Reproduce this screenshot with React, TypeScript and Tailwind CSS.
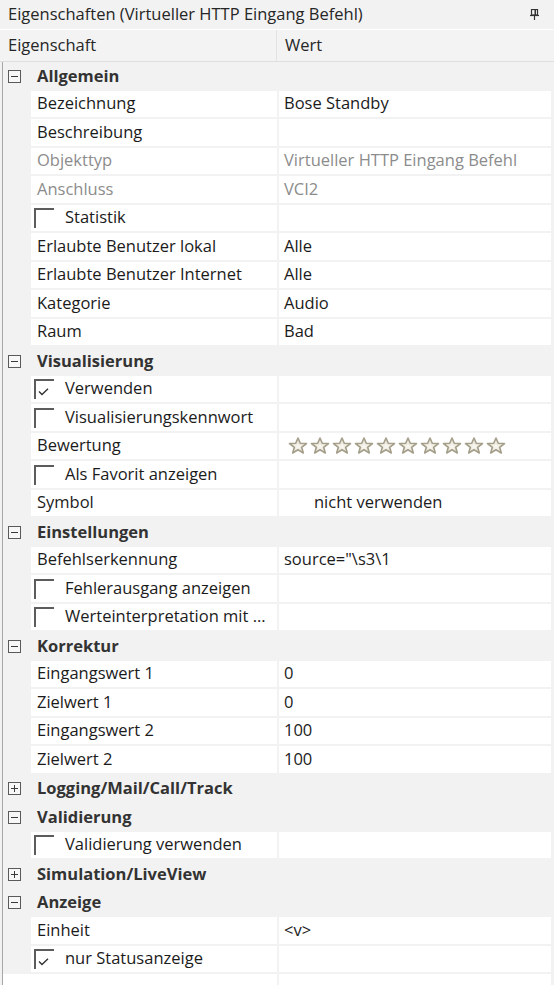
import React from 'react'

type Row =
  | { kind: 'cat'; label: string; open: boolean }
  | { kind: 'prop'; label: string; value?: React.ReactNode; disabled?: boolean; check?: boolean | null; indent?: boolean }

const rows: Row[] = [
  { kind: 'cat', label: 'Allgemein', open: true },
  { kind: 'prop', label: 'Bezeichnung', value: 'Bose Standby' },
  { kind: 'prop', label: 'Beschreibung' },
  { kind: 'prop', label: 'Objekttyp', value: 'Virtueller HTTP Eingang Befehl', disabled: true },
  { kind: 'prop', label: 'Anschluss', value: 'VCI2', disabled: true },
  { kind: 'prop', label: 'Statistik', check: false },
  { kind: 'prop', label: 'Erlaubte Benutzer lokal', value: 'Alle' },
  { kind: 'prop', label: 'Erlaubte Benutzer Internet', value: 'Alle' },
  { kind: 'prop', label: 'Kategorie', value: 'Audio' },
  { kind: 'prop', label: 'Raum', value: 'Bad' },
  { kind: 'cat', label: 'Visualisierung', open: true },
  { kind: 'prop', label: 'Verwenden', check: true },
  { kind: 'prop', label: 'Visualisierungskennwort', check: false },
  { kind: 'prop', label: 'Bewertung', value: 'stars' },
  { kind: 'prop', label: 'Als Favorit anzeigen', check: false },
  { kind: 'prop', label: 'Symbol', value: 'nicht verwenden', indent: true },
  { kind: 'cat', label: 'Einstellungen', open: true },
  { kind: 'prop', label: 'Befehlserkennung', value: 'source="\\s3\\1' },
  { kind: 'prop', label: 'Fehlerausgang anzeigen', check: false },
  { kind: 'prop', label: 'Werteinterpretation mit ...', check: false },
  { kind: 'cat', label: 'Korrektur', open: true },
  { kind: 'prop', label: 'Eingangswert 1', value: '0' },
  { kind: 'prop', label: 'Zielwert 1', value: '0' },
  { kind: 'prop', label: 'Eingangswert 2', value: '100' },
  { kind: 'prop', label: 'Zielwert 2', value: '100' },
  { kind: 'cat', label: 'Logging/Mail/Call/Track', open: false },
  { kind: 'cat', label: 'Validierung', open: true },
  { kind: 'prop', label: 'Validierung verwenden', check: false },
  { kind: 'cat', label: 'Simulation/LiveView', open: false },
  { kind: 'cat', label: 'Anzeige', open: true },
  { kind: 'prop', label: 'Einheit', value: '<v>' },
  { kind: 'prop', label: 'nur Statusanzeige', check: true },
]

function Star() {
  return (
    <svg width="20" height="17" viewBox="0 0 20 17">
      <path
        d="M10 1 L12.3 6.2 L18.5 6.5 L13.7 10.3 L15.3 16 L10 12.8 L4.7 16 L6.3 10.3 L1.5 6.5 L7.7 6.2 Z"
        fill="#ece8dc"
        stroke="#a49f8b"
        strokeWidth="1.6"
        strokeLinejoin="round"
      />
      <path d="M10 5.5 L11 8.3 L13.8 8.5 L11.6 10.2 L12.4 12.8 L10 11.3 L7.6 12.8 L8.4 10.2 L6.2 8.5 L9 8.3 Z" fill="#f7f5ef" />
    </svg>
  )
}

function Expander({ open }: { open: boolean }) {
  return (
    <div className="relative w-[13px] h-[13px] border border-[#5a5a5a] bg-[#f7f7f7]">
      <div className="absolute left-[2px] right-[2px] top-[5px] h-px bg-[#3a3a3a]" />
      {!open && <div className="absolute top-[2px] bottom-[2px] left-[5px] w-px bg-[#3a3a3a]" />}
    </div>
  )
}

function Check({ on }: { on: boolean }) {
  return (
    <div className="relative w-[20px] h-[20px] border-t-2 border-l-2 border-[#5c5c5c] shrink-0">
      {on && (
        <svg className="absolute left-[2px] top-[7px]" width="11" height="8" viewBox="0 0 11 8">
          <path d="M1 3.5 L4 6.5 L10 0.8" fill="none" stroke="#333" strokeWidth="1.4" />
        </svg>
      )}
    </div>
  )
}

export default function App() {
  return (
    <div
      className="w-[554px] h-[985px] overflow-hidden bg-[#f2f2f2] text-[16.5px] text-[#1b1b1b]"
      style={{ fontFamily: '"Open Sans", "Noto Sans", sans-serif' }}
    >
      {/* title */}
      <div className="h-[29px] flex items-center justify-between pl-[8px] pr-[15px] text-[16.5px] text-[#262626]">
        <span>Eigenschaften (Virtueller HTTP Eingang Befehl)</span>
        <svg width="9" height="11" viewBox="0 0 9 11">
          <rect x="1.5" y="0.5" width="6" height="5.5" fill="none" stroke="#333" strokeWidth="1.2" />
          <rect x="4.5" y="0.5" width="1.5" height="5.5" fill="#333" />
          <path d="M0 6.5 H9" stroke="#333" strokeWidth="1.2" />
          <path d="M4.5 6.5 V11" stroke="#333" strokeWidth="1.2" />
        </svg>
      </div>

      {/* header */}
      <div className="h-[33px] flex border-t border-t-white border-b border-b-[#dedede] bg-[#f3f3f3] text-[#262626]">
        <div className="w-[277px] pl-[8px] flex items-center border-r border-[#e2e2e2]">Eigenschaft</div>
        <div className="flex-1 pl-[8px] flex items-center">Wert</div>
      </div>

      <div className="ml-[2px] border-l border-[#a7a7a7]">
        {rows.map((r, i) =>
          r.kind === 'cat' ? (
            <div key={i} className="h-[28.5px] flex items-center">
              <div className="w-[34px] pl-[5px] flex items-center">
                <Expander open={r.open} />
              </div>
              <span className="font-bold text-[#333] whitespace-nowrap">{r.label}</span>
            </div>
          ) : (
            <div key={i} className="h-[28.5px] flex pb-[2px] pr-[3px]">
              <div className="w-[28px] shrink-0" />
              <div className={`w-[246px] bg-white flex items-center overflow-hidden ${r.check === undefined ? 'pl-[6px]' : 'pl-[3px]'}`}>
                {r.check !== undefined && r.check !== null && (
                  <div className="mr-[11px] mt-[1px]">
                    <Check on={r.check} />
                  </div>
                )}
                <span className={`whitespace-nowrap ${r.disabled ? 'text-[#8c8c8c]' : ''}`}>{r.label}</span>
              </div>
              <div className="w-[2px]" />
              <div
                className={`flex-1 bg-white flex items-center whitespace-nowrap overflow-hidden ${
                  r.indent ? 'pl-[35px]' : r.value === 'stars' ? 'pl-[9px]' : 'pl-[5px]'
                } ${r.disabled ? 'text-[#8c8c8c]' : ''}`}
              >
                {r.value === 'stars' ? (
                  <div className="flex gap-[2px]">
                    {Array.from({ length: 10 }).map((_, k) => (
                      <Star key={k} />
                    ))}
                  </div>
                ) : (
                  r.value
                )}
              </div>
            </div>
          )
        )}
        <div className="h-[20px] flex pr-[3px]">
          <div className="w-[274px] bg-white" />
          <div className="w-[2px]" />
          <div className="flex-1 bg-white" />
        </div>
      </div>
    </div>
  )
}
